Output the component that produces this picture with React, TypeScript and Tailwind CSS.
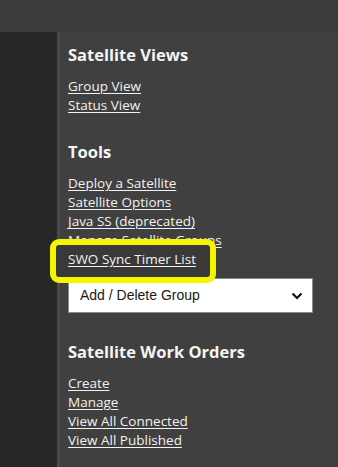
import React from "react";

const linkCls = "block text-[13.5px] leading-[19px] text-[#f2f2f2] underline underline-offset-2 decoration-1";

function Heading({ children }: { children: React.ReactNode }) {
  return <h2 className="text-[16.5px] leading-[22px] font-bold text-[#f5f5f5]">{children}</h2>;
}

export default function App() {
  return (
    <div className="w-[338px] h-[467px] overflow-hidden flex flex-col bg-[#3f3f3f]" style={{ fontFamily: '"Open Sans", "Noto Sans", sans-serif' }}>
      <div className="h-[32px] bg-[#3b3b3b] shrink-0" />
      <div className="flex flex-1">
        <div className="w-[57px] bg-[#272727]" />
        <div className="w-[3px] bg-[#4a4a4a]" />
        <div className="flex-1 bg-[#404040] pl-2 pt-[12px] relative">
          <Heading>Satellite Views</Heading>
          <div className="mt-[11px]">
            <a className={linkCls}>Group View</a>
            <a className={linkCls}>Status View</a>
          </div>
          <div className="mt-[26px]">
            <Heading>Tools</Heading>
          </div>
          <div className="mt-[11px]">
            <a className={linkCls}>Deploy a Satellite</a>
            <a className={linkCls}>Satellite Options</a>
            <a className={linkCls}>Java SS (deprecated)</a>
            <a className={linkCls}>Manage Satellite Groups</a>
            <div className="relative z-10">
              <div className="absolute left-[-18px] top-[-11px] w-[166px] h-[44px] rounded-[9px] border-[6px] border-[#f5f500] bg-[#393939]" />
              <a className={linkCls + " relative"}>SWO Sync Timer List</a>
            </div>
          </div>
          <div className="mt-[9px] w-[245px] h-[35px] bg-white border border-[#8a8a8a] flex items-center justify-between pl-[11px] pr-[9px] relative" style={{ fontFamily: '"Liberation Sans", Arial, sans-serif' }}>
            <span className="text-[14px] text-[#1a1a1a]">Add / Delete Group</span>
            <svg width="12" height="8" viewBox="0 0 12 8"><path d="M1.5 1.5 L6 6 L10.5 1.5" stroke="#111" strokeWidth="2.2" fill="none" /></svg>
          </div>
          <div className="mt-[28px]">
            <Heading>Satellite Work Orders</Heading>
          </div>
          <div className="mt-[11px]">
            <a className={linkCls}>Create</a>
            <a className={linkCls}>Manage</a>
            <a className={linkCls}>View All Connected</a>
            <a className={linkCls}>View All Published</a>
          </div>
        </div>
      </div>
    </div>
  );
}
